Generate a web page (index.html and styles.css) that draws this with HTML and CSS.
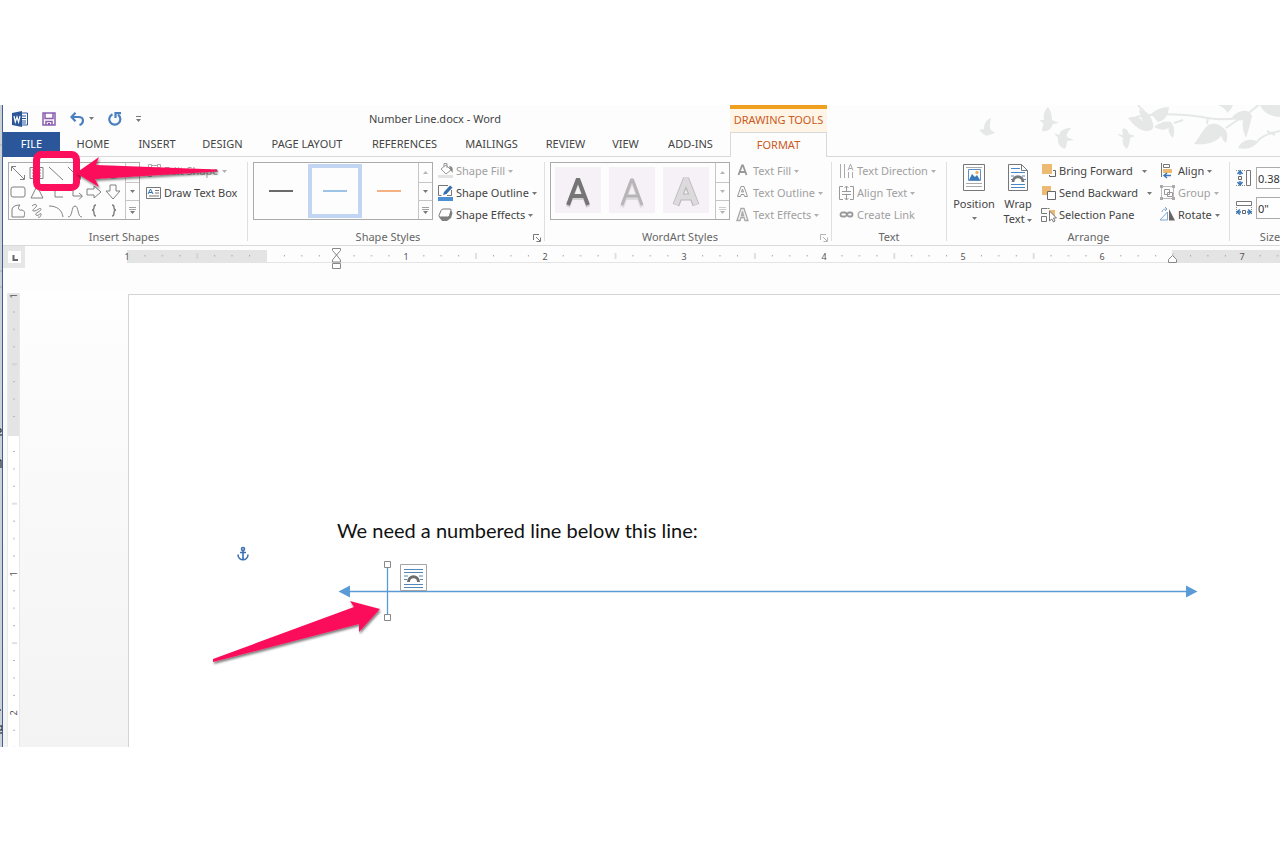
FILE: index.html
```html
<!DOCTYPE html>
<html lang="en">
<head>
<meta charset="utf-8">
<title>Number Line.docx - Word</title>
<link rel="stylesheet" href="styles.css">
</head>
<body>
<svg class="defs" aria-hidden="true">
  <symbol id="caret" viewBox="0 0 5 3"><path d="M0 0h5L2.5 3z" fill="currentColor"/></symbol>
  <symbol id="up" viewBox="0 0 5 3"><path d="M0 3h5L2.5 0z" fill="currentColor"/></symbol>
  <symbol id="more" viewBox="0 0 7 7"><path d="M0 .5h7M0 2.5h7" stroke="currentColor" stroke-width=".7"/><path d="M1 4h5L3.500 7z" fill="currentColor"/></symbol>
  <symbol id="launch" viewBox="0 0 8 8"><path d="M.5 6V.5H6M3 3l4 4M7.500 3.500v4h-4" fill="none" stroke="currentColor"/></symbol>
</svg>
<main class="screen">
  <div class="behind">
    <svg width="2" height="642" aria-hidden="true"><path d="M0 40h2M0 166h2M0 182h2" stroke="#a5abb2"/><path d="M0 324h1v3H0M0 330h2M0 355h1v8M0 605h1M0 621h2v4H0M0 628h2" stroke="#111" fill="none"/></svg>
  </div>
  <div class="window">
    <header class="titlebar">
      <div class="quick">
        <button aria-label="Word"><svg width="16" height="16" viewBox="0 0 16 16"><path d="M9 2h6.500v12H9" fill="#fff" stroke="#2b579a"/><path d="M10 5h4M10 7.500h4M10 10h4M10 12h4" stroke="#2b579a"/><path d="M0 2l10-2v16L0 14z" fill="#2b579a"/><path d="M2 5l1.300 6L5 6l1.600 5L8 5" fill="none" stroke="#fff" stroke-width="1.200"/></svg></button>
        <button aria-label="Save"><svg width="14" height="14" viewBox="0 0 14 14"><path d="M1 1h12v12H1zM3 1v5.500h8V1M4 13V9.500h6V13" fill="none" stroke="#8a5cae" stroke-width="1.500"/><path d="M6 11h2v2H6z" fill="#8a5cae"/></svg></button>
        <button class="undo" aria-label="Undo"><svg width="14" height="14" viewBox="0 0 14 14"><path d="M2 5h6.500c6 0 5.500 6.500 1 8" fill="none" stroke="#4a7fc0" stroke-width="2.200"/><path d="M5.500.8L1.500 5l4 4.200" fill="none" stroke="#4a7fc0" stroke-width="2.200"/></svg><svg class="c" width="5" height="3"><use href="#caret"/></svg></button>
        <button aria-label="Redo"><svg width="14" height="14" viewBox="0 0 14 14"><path d="M4.500 2.200a5.500 5.500 0 1 0 5.500.5" fill="none" stroke="#4a7fc0" stroke-width="2.200"/><path d="M7.500 6V1.200H13" fill="none" stroke="#4a7fc0" stroke-width="2.200"/></svg></button>
        <button class="custom" aria-label="Customize"><svg width="5" height="6" viewBox="0 0 5 6"><path d="M0 .5h5" stroke="#777"/><path d="M0 3h5L2.500 6z" fill="#777"/></svg></button>
      </div>
      <h1 class="title">Number Line.docx - Word</h1>
      <div class="context">DRAWING TOOLS</div>
      <svg class="art" width="320" height="50" viewBox="0 0 320 50" aria-hidden="true">
        <g fill="#e5e8e7">
          <path d="M19 30l5-1c0-5 2-9 7-11-1 5-2 8 0 12l4 3-6 2c-4 2-6-2-10-5z"/>
          <path d="M79 20h5c-1-6 1-10 4-13 3 4 4 8 4 13l7 3-6 1c-2 5-5 8-11 7 0-4 2-6 1-8z"/>
          <path d="M94 33l5 2c2-5 5-7 12-7-3 4-5 7-4 9l7 3-7 1c0 3-1 6-2 8-5-2-8-5-7-11z"/>
          <path d="M157 34l6 1c-1-4-1-6 1-7 3 1 4 3 5 6l6 2-5 2c0 4-1 7-3 11-4-3-5-7-4-11z"/>
          <path d="M168 18c6-2 12-2 15 4-1-5-4-9-4-12 8 1 12 4 14 14 1 5-1 7-7 7-8-1-13-7-18-13z"/>
          <path d="M181 5c3 4 2 8 7 11M191 14c5-4 10-7 18-7-1 8-3 13-11 15zM194 27c8-6 13-6 17-5-1 6-5 11-17 5zM211 22c4 5 4 10 2 16-5-5-6-9-2-16z"/>
          <path d="M248 25c8-3 13 0 17 5-5 10-14 16-31 14 5-6 7-12 14-19zM263 28c5 2 5 9 3 15-5-4-6-8-3-15z"/>
          <path d="M272 17c8-8 17-8 20-1-2 9-4 15-6 22-3-7-4-12-3-18-4 1-7 0-11-3zM278 48c4-9 14-10 20-6-5 6-11 8-20 6zM258 5h15c-2 5-4 6-6 8-1-4-5-6-9-8zM300 5h20v12c-11-1-17-5-20-12z"/>
        </g>
        <path d="M176 17c24-5 58-2 71 1 15 2 27 2 38-2l16-13M214 23l9-3M247 24l1-7M266 28l13-9M296 43c4-6 10-9 24-12M307 31l8 4M178 5l8 10" fill="none" stroke="#e5e8e7" stroke-width="2"/>
      </svg>
    </header>

    <nav class="tabs">
      <button class="file">FILE</button>
      <button>HOME</button><button>INSERT</button><button>DESIGN</button><button>PAGE LAYOUT</button><button>REFERENCES</button><button>MAILINGS</button><button>REVIEW</button><button>VIEW</button><button>ADD-INS</button>
      <button class="active">FORMAT</button>
    </nav>

    <div class="ribbon">
      <section class="group g1">
        <div class="body">
          <div class="gallery shapes">
            <div class="cells">
              <button aria-label="Double arrow"><svg viewBox="0 0 18 18"><path d="M3 3l12 12M2.500 7V2.500H7M11 15.500h4.500V11"/></svg></button>
              <button aria-label="Text box"><svg viewBox="0 0 18 18"><path d="M2 3.500h13v11H2zM4 6h4M10 6h3M4 9h9M4 12h9"/></svg></button>
              <button aria-label="Line"><svg viewBox="0 0 18 18"><path d="M2 3l14 13"/></svg></button>
              <button aria-label="Arrow"><svg viewBox="0 0 18 18"><path d="M2 3l12 12M10 15.500h4.500V11"/></svg></button>
              <button aria-label="Rectangle"><svg viewBox="0 0 18 18"><path d="M2 4h13v10H2z"/></svg></button>
              <button aria-label="Oval"><svg viewBox="0 0 18 18"><ellipse cx="9" cy="9" rx="7" ry="5"/></svg></button>
              <button aria-label="Rounded rectangle"><svg viewBox="0 0 18 18"><rect x="2" y="4" width="14" height="10" rx="2"/></svg></button>
              <button aria-label="Triangle"><svg viewBox="0 0 18 18"><path d="M9 3l6 12H3z"/></svg></button>
              <button aria-label="Elbow"><svg viewBox="0 0 18 18"><path d="M3 4h5v10h8"/></svg></button>
              <button aria-label="Elbow arrow"><svg viewBox="0 0 18 18"><path d="M3 4h4v9h9M13 10l3.500 3L13 16.500"/></svg></button>
              <button aria-label="Right arrow"><svg viewBox="0 0 18 18"><path d="M2 6h7V3l7 6-7 6v-3H2z"/></svg></button>
              <button aria-label="Down arrow"><svg viewBox="0 0 18 18"><path d="M6 2h6v6h4l-7 8-7-8h4z"/></svg></button>
              <button aria-label="Freeform"><svg viewBox="0 0 18 18"><path d="M3 15V7c1-3 4-4 8-4-3 3-1 6 2 5 3 1 3 3 2 7z"/></svg></button>
              <button aria-label="Scribble"><svg viewBox="0 0 18 18"><path d="M4 4c3-3 6-1 4 1S3 9 6 9s6-4 7-2-7 4-5 6 5-3 5-1-1 4-3 3"/></svg></button>
              <button aria-label="Arc"><svg viewBox="0 0 18 18"><path d="M2 4c8 0 13 4 14 11"/></svg></button>
              <button aria-label="Curve"><svg viewBox="0 0 18 18"><path d="M2 15c5 0 3-11 7-11s2 11 7 11"/></svg></button>
              <button aria-label="Left brace"><svg viewBox="0 0 18 18"><path d="M11 3c-4 0 0 5-4 5 4 0 0 6 4 6" stroke-width="1.400"/></svg></button>
              <button aria-label="Right brace"><svg viewBox="0 0 18 18"><path d="M8 3c4 0 0 5 4 5-4 0 0 6-4 6" stroke-width="1.400"/></svg></button>
            </div>
            <div class="scroll"><button aria-label="Up"><svg width="5" height="3"><use href="#up"/></svg></button><button aria-label="Down"><svg width="5" height="3"><use href="#caret"/></svg></button><button aria-label="More"><svg width="7" height="7"><use href="#more"/></svg></button></div>
          </div>
          <div class="cmds">
            <button class="off"><svg width="16" height="16" viewBox="0 0 16 16"><path d="M6 2.500h5M4 5v5" fill="none" stroke="#aaa"/><path d="M2.500 1.500h3v3h-3zM11.500 1.500h3v3h-3zM2.500 10.500h3v3h-3z" fill="none" stroke="#aaa"/></svg>Edit Shape<svg class="c" width="5" height="3"><use href="#caret"/></svg></button>
            <button><svg width="16" height="16" viewBox="0 0 16 16"><path d="M.5 2.500h14v11H.5zM9 5.500h4M9 8h4M3 11h10" fill="none" stroke="#777"/><path d="M2 9l2.500-5L7 9M3 7.500h3" fill="none" stroke="#2f6fb7"/></svg>Draw Text Box</button>
          </div>
        </div>
        <h2>Insert Shapes</h2>
      </section>

      <section class="group g2">
        <div class="body">
          <div class="gallery styles">
            <div class="cells"><button aria-label="Dark line"><i class="k"></i></button><button class="sel" aria-label="Blue line"><i class="b"></i></button><button aria-label="Orange line"><i class="o"></i></button></div>
            <div class="scroll"><button class="dim" aria-label="Up"><svg width="5" height="3"><use href="#up"/></svg></button><button aria-label="Down"><svg width="5" height="3"><use href="#caret"/></svg></button><button aria-label="More"><svg width="7" height="7"><use href="#more"/></svg></button></div>
          </div>
          <div class="cmds">
            <button class="off"><svg width="16" height="16" viewBox="0 0 16 16"><path d="M0 12h15v3H0z" fill="#e3e3e3"/><path d="M3 6l5-4 5 5-5 4zM6 4V.5h3V5" fill="#fff" stroke="#999"/><path d="M11 3c4 0 4 3 3.500 7L12 6z" fill="#888"/></svg>Shape Fill<svg class="c" width="5" height="3"><use href="#caret"/></svg></button>
            <button><svg width="16" height="16" viewBox="0 0 16 16"><path d="M0 12h15v4H0z" fill="#4a90d2"/><path d="M10 .5H.5v10h3M13.500 5v5.500H9" fill="none" stroke="#777"/><path d="M5 10l1-3L12 .5 14.500 2.500 8.500 9z" fill="#356fae"/></svg>Shape Outline<svg class="c" width="5" height="3"><use href="#caret"/></svg></button>
            <button><svg width="16" height="16" viewBox="0 0 16 16"><path d="M13 3l1.500 3-1.500 5-4 3H4l-3-4z" fill="#808080"/><path d="M5.500 2H12q1.500 0 1 1.500l-1.500 5Q11 10 9.500 10H2.500Q.5 10 1 8.500l2-5Q3.500 2 5.500 2z" fill="#fff" stroke="#777"/></svg>Shape Effects<svg class="c" width="5" height="3"><use href="#caret"/></svg></button>
          </div>
        </div>
        <h2>Shape Styles</h2>
        <button class="launch" aria-label="Shape Styles options"><svg width="8" height="8"><use href="#launch"/></svg></button>
      </section>

      <section class="group g3">
        <div class="body">
          <div class="gallery art-styles">
            <div class="cells">
              <button aria-label="Dark fill"><svg viewBox="0 0 46 46"><path d="M13 40l9.500-26h1L33 40M16 31h14" fill="none" stroke="#d5d0d5" stroke-width="4"/><path d="M13 38l9.500-25h1L33 38M16 29h14" fill="none" stroke="#757575" stroke-width="4"/></svg></button>
              <button aria-label="Light fill"><svg viewBox="0 0 46 46"><path d="M13 40l9.500-26h1L33 40M16 31h14" fill="none" stroke="#dedade" stroke-width="4"/><path d="M13 38l9.500-25h1L33 38M16 29h14" fill="none" stroke="#b8b5b8" stroke-width="3"/></svg></button>
              <button aria-label="Outline fill"><svg viewBox="0 0 46 46"><path d="M13 38l9.500-24h1L33 38M16 30h14" fill="none" stroke="#bab7ba" stroke-width="7"/><path d="M13 37.500l9.500-24h1L33 37.500M16 30h14" fill="none" stroke="#dcdadc" stroke-width="5"/></svg></button>
            </div>
            <div class="scroll dim"><button aria-label="Up"><svg width="5" height="3"><use href="#up"/></svg></button><button aria-label="Down"><svg width="5" height="3"><use href="#caret"/></svg></button><button aria-label="More"><svg width="7" height="7"><use href="#more"/></svg></button></div>
          </div>
          <div class="cmds">
            <button class="off"><svg width="16" height="16" viewBox="0 0 16 16"><path d="M3.500 12L7 2.500h1L11.500 12M5 9h5" fill="none" stroke="#999" stroke-width="1.800"/></svg>Text Fill<svg class="c" width="5" height="3"><use href="#caret"/></svg></button>
            <button class="off"><svg width="16" height="16" viewBox="0 0 16 16"><path d="M2.500 11.500l3.500-10h3l3.500 10h-3L9 9.500H6l-.5 2zM6.500 7h2l-1-3z" fill="none" stroke="#999"/></svg>Text Outline<svg class="c" width="5" height="3"><use href="#caret"/></svg></button>
            <button class="off"><svg width="16" height="16" viewBox="0 0 16 16"><path d="M2 13.500l4-12h3l4 12h-3l-1-3H6l-1 3zM6.500 8.500h2l-1-4z" fill="#f4f4f4" stroke="#aaa" stroke-width="1.300"/></svg>Text Effects<svg class="c" width="5" height="3"><use href="#caret"/></svg></button>
          </div>
        </div>
        <h2>WordArt Styles</h2>
        <button class="launch dim" aria-label="WordArt Styles options"><svg width="8" height="8"><use href="#launch"/></svg></button>
      </section>

      <section class="group g4">
        <div class="body">
          <div class="cmds">
            <button class="off"><svg width="16" height="16" viewBox="0 0 16 16"><path d="M1.500 1v14M5.500 1v14M9.500 9v6M13.500 9v6M9 7.500L11.500 1 14 7.500M10 5.500h3" fill="none" stroke="#aaa"/></svg>Text Direction<svg class="c" width="5" height="3"><use href="#caret"/></svg></button>
            <button class="off"><svg width="16" height="16" viewBox="0 0 16 16"><path d="M4 1.500H.5v13H4M11 1.500h3.500v13H11M3 6.500h9M3 9.500h9M7.500 1v5M5.500 3l2-2 2 2M7.500 10v5M5.500 13l2 2 2-2" fill="none" stroke="#999"/></svg>Align Text<svg class="c" width="5" height="3"><use href="#caret"/></svg></button>
            <button class="off"><svg width="16" height="16" viewBox="0 0 16 16"><path d="M6 5.500H3.500a2 2 0 0 0 0 4H6c2 0 2-4 4-4h1.500a2 2 0 0 1 0 4H10c-2 0-2-4-4-4" fill="none" stroke="#999" stroke-width="1.800"/></svg>Create Link</button>
          </div>
        </div>
        <h2>Text</h2>
      </section>

      <section class="group g5">
        <div class="body">
          <button class="big"><svg width="22" height="28" viewBox="0 0 22 28"><path d="M.5.500h21v26H.5z" fill="#fff" stroke="#777"/><path d="M3 3.500h16M3 19.500h16M3 22.500h16" stroke="#aaa"/><path d="M5.500 5.500h12v11h-12z" fill="#fff" stroke="#5b8fc7"/><path d="M6 16l3-6 3 3 2-2 3 5z" fill="#3a77b8"/><circle cx="14" cy="8.500" r="1.700" fill="#eab36b"/></svg><span>Position</span><svg class="c" width="5" height="3"><use href="#caret"/></svg></button>
          <button class="big wrap"><svg width="22" height="28" viewBox="0 0 22 28"><path d="M1.500.500h13l6 6v20h-19zM14.500.500v6h6" fill="#fff" stroke="#777"/><path d="M4 4.500h9M4 8.500h14M4 12h3M15 12h3M4 15.500h2M17 15.500h2M4 20.500h14M4 23.500h14" stroke="#4a86c5"/><path d="M6 18c0-7 10-7 10 0" fill="none" stroke="#777" stroke-width="2.800"/></svg><span>Wrap</span><span>Text <svg class="c" width="5" height="3"><use href="#caret"/></svg></span></button>
          <div class="cmds order">
            <button><svg width="16" height="16" viewBox="0 0 16 16"><path d="M1 1h10v10H1z" fill="#ecba72"/><path d="M12 7.500h2.500v6h-6V12" fill="none" stroke="#666"/></svg><span>Bring Forward</span><svg class="c" width="5" height="3"><use href="#caret"/></svg></button>
            <button class="wide"><svg width="16" height="16" viewBox="0 0 16 16"><path d="M1 1h9v9H1z" fill="#ecba72"/><path d="M6.500 6.500h8v8h-8z" fill="#fff" stroke="#666"/></svg><span>Send Backward</span><svg class="c" width="5" height="3"><use href="#caret"/></svg></button>
            <button><svg width="16" height="16" viewBox="0 0 16 16"><path d="M8 3h6v8H8z" fill="#ecba72"/><path d="M6 1.500H.5v5H6M.5 9.500h5v5h-5zM6.500 1.500h2" fill="none" stroke="#777"/><path d="M8.500 4v10l2.300-2 1.700 3 1.500-1-1.500-3h3z" fill="#fff" stroke="#777"/></svg><span>Selection Pane</span></button>
          </div>
          <div class="cmds place">
            <button><svg width="16" height="16" viewBox="0 0 16 16"><path d="M1.500 0v14" stroke="#777"/><path d="M3.500 1.500h6v3h-6z" fill="#fff" stroke="#777"/><path d="M3 6h9v4H3z" fill="#ecba72"/><path d="M4 12.500h7M7 10l-3 2.500L7 15" fill="none" stroke="#3a77b8" stroke-width="1.500"/></svg>Align<svg class="c" width="5" height="3"><use href="#caret"/></svg></button>
            <button class="off"><svg width="16" height="16" viewBox="0 0 16 16"><path d="M1.500 1.500h12v12h-12z" fill="none" stroke="#bbb"/><path d="M4.500 4.500h5v5h-5zM7.500 7.500h5v4h-5z" fill="none" stroke="#999"/><path d="M0 0h3v3H0zM12 0h3v3h-3zM0 12h3v3H0zM12 12h3v3h-3z" fill="#aaa"/></svg>Group<svg class="c" width="5" height="3"><use href="#caret"/></svg></button>
            <button><svg width="16" height="16" viewBox="0 0 16 16"><path d="M7.500 5v8H0zM2 5c0-2 2-3 4-3M5 0l2 2-2 2" fill="none" stroke="#7ea6cf"/><path d="M9 2l6 11.500H9z" fill="#666"/></svg>Rotate<svg class="c" width="5" height="3"><use href="#caret"/></svg></button>
          </div>
        </div>
        <h2>Arrange</h2>
      </section>

      <section class="group g6">
        <div class="body sizes">
          <label><svg width="16" height="18" viewBox="0 0 16 18"><path d="M10.500 1.500h4v15h-4z" fill="#fff" stroke="#777"/><path d="M0 1.500h9M0 16.500h9" stroke="#888" stroke-dasharray="1 1"/><path d="M4 2v4M4 12v4M1.500 5L4 2l2.500 3M1.500 13L4 16l2.500-3" fill="none" stroke="#3a77b8" stroke-width="1.500"/><path d="M2.500 7.500h3v3h-3z" fill="none" stroke="#666"/></svg><input type="text" value='0.38"' aria-label="Shape height"></label>
          <label><svg width="16" height="18" viewBox="0 0 16 18"><path d="M.5 2.500h15v4H.5z" fill="#fff" stroke="#777"/><path d="M.5 8v8M15.500 8v8" stroke="#888" stroke-dasharray="1 1"/><path d="M1 13h4M11 13h4M4 10.500L1 13l3 2.500M12 10.500l3 2.500-3 2.500" fill="none" stroke="#3a77b8" stroke-width="1.500"/><path d="M6.500 11.500h3v3h-3z" fill="none" stroke="#666"/></svg><input type="text" value='0"' aria-label="Shape width"></label>
        </div>
        <h2>Size</h2>
      </section>
    </div>

    <div class="hruler">
      <button class="tabstop" aria-label="Left tab"><svg width="13" height="12" viewBox="0 0 13 12"><path d="M0 0h13v12H0z" fill="#fff"/><path d="M5.500 4v5H10" fill="none" stroke="#666" stroke-width="2"/></svg></button>
      <svg class="scale" width="1160" height="26" aria-hidden="true">
        <defs>
          <pattern id="ticks" x="144" y="0" width="139.400" height="13" patternUnits="userSpaceOnUse"><path d="M17.400 7v1.500M34.800 7v1.500M52.300 7v1.500M87.100 7v1.500M104.500 7v1.500M122 7v1.500" stroke="#a5a5a5"/><path d="M69.700 5v6" stroke="#c4c4c4"/></pattern>
        </defs>
        <path d="M4 2h140v12H4zM1049 2h111v12h-111z" fill="#e4e4e4"/><path d="M4 14.500h1156" stroke="#e4e4e4"/>
        <path d="M8 2h1152v11H8z" fill="url(#ticks)"/>
        <g class="nums"><text x="4" y="12">1</text><text x="283" y="12">1</text><text x="422" y="12">2</text><text x="561" y="12">3</text><text x="701" y="12">4</text><text x="840" y="12">5</text><text x="979" y="12">6</text><text x="1119" y="12">7</text></g>
        <path d="M209.500.500h8v2l-4 4.500 4 5v2h-8v-2l4-5-4-4.500zM209.500 15.500h8v5h-8zM1045.500 14.500v-3l4-4 4 4v3z" fill="#fff" stroke="#888"/>
      </svg>
    </div>

    <div class="workspace">
      <svg class="vruler" width="13" height="454" aria-hidden="true">
        <defs><pattern id="vticks" x="0" y="141" width="13" height="139.400" patternUnits="userSpaceOnUse"><path d="M6 17.400h2M6 34.800h2M6 52.300h2M6 87.100h2M6 104.500h2M6 122h2" stroke="#b5b5b5"/><path d="M5 69.700h5" stroke="#c4c4c4"/></pattern></defs>
        <path d="M0 0h12v454H0z" fill="#fff"/><path d="M0 0h12v143H0z" fill="#e4e4e4"/><path d="M.5 0v454M12.500 0v454" stroke="#e8e8e8"/>
        <path d="M0 6h12v448H0z" fill="url(#vticks)"/>
        <g class="nums"><text transform="translate(10 3) rotate(-90)">1</text><text transform="translate(10 281) rotate(-90)">1</text><text transform="translate(10 420) rotate(-90)">2</text></g>
      </svg>
      <article class="page">
        <p>We need a numbered line below this line:</p>
        <svg class="drawing" width="1151" height="452" viewBox="129 295 1151 452" aria-hidden="true">
          <defs><filter id="shadow" x="-10%" y="-10%" width="120%" height="130%"><feDropShadow dx="1" dy="2" stdDeviation="1.300" flood-opacity=".5"/></filter></defs>
          <g fill="none" stroke="#3b6fb0" stroke-width="1.600"><circle cx="243" cy="549" r="1.500"/><path d="M243 551v9M240 552.500h6M238 554.500c0 7 10 7 10 0"/></g>
          <path d="M345 591.500h845M387.500 568v47" stroke="#5b9bd5" stroke-width="1.300"/>
          <path d="M338.500 591.500l11.500-6v12zM1197.500 591.500l-11.500-6v12z" fill="#5b9bd5"/>
          <path d="M384.500 561.500h6v6h-6zM384.500 614.500h6v6h-6z" fill="#fff" stroke="#888"/>
          <path d="M400.500 564.500h26v26h-26z" fill="#fff" stroke="#a5a5a5"/>
          <path d="M404 569.500h19M404 572.500h19M404 576h4M419 576h4M404 579.500h3M420 579.500h3M404 584.500h19M404 587.500h19" stroke="#5586b8"/>
          <path d="M408.500 582c0-7 10-7 10 0" fill="none" stroke="#6d6d6d" stroke-width="3"/>
          <path d="M213 659L354 607l-4-6 30 8-21 23 0-8-146 38z" fill="#fc0f5c" filter="url(#shadow)"/>
        </svg>
      </article>
    </div>
    <svg class="callout" width="200" height="50" viewBox="25 147 200 50" aria-hidden="true">
      <defs><filter id="shadow2" x="-10%" y="-10%" width="120%" height="140%"><feDropShadow dx="1" dy="2" stdDeviation="1.300" flood-opacity=".5"/></filter></defs>
      <rect x="36.500" y="154.500" width="40" height="33" rx="5" fill="none" stroke="#fc0f5c" stroke-width="7"/>
      <path d="M76 173l23-16-3 8 121 4.500v2L95 179l4 8z" fill="#fc0f5c" filter="url(#shadow2)"/>
    </svg>
  </div>
</main>
</body>
</html>
```
FILE: styles.css
```css
* { box-sizing: border-box; }
body {
  margin: 0;
  background: #fff;
  color: #444;
  font-family: "Noto Sans", "Open Sans", sans-serif;
  font-size: 11px;
  line-height: 16px;
}
button {
  margin: 0;
  padding: 0;
  border: 0;
  background: none;
  color: inherit;
  font: inherit;
  white-space: nowrap;
}
svg { display: block; flex: none; }
.defs { position: absolute; width: 0; height: 0; }

.screen { display: flex; padding: 105px 0; }
.behind { flex: none; width: 3px; background: #ccd1d8; border-right: 1px solid #3c6294; overflow: hidden; }
.window { position: relative; flex: 1; min-width: 0; overflow: hidden; background: #fdfdfd; }

.titlebar { position: relative; display: flex; align-items: center; height: 27px; }
.quick { display: flex; align-items: center; gap: 14px; width: 366px; padding-left: 9px; }
.undo { display: flex; align-items: center; gap: 5px; }
.title { width: 361px; margin: 0; font-size: 11px; font-weight: 400; }
.context {
  width: 97px;
  height: 27px;
  border-top: 4px solid #f0a01f;
  background: #fef5e7;
  color: #cb5a1b;
  line-height: 22px;
  text-align: center;
  white-space: nowrap;
}
.art { position: absolute; top: -5px; right: 0; }

.tabs {
  display: grid;
  grid-template-columns: 57px 66px 62px 69px 100px 95px 79px 69px 51px 79px 97px;
  height: 25px;
  border-bottom: 1px solid #d9d9d9;
}
.tabs button { padding-bottom: 1px; }
.file { background: #2b579a; color: #fff; }
.active { height: 25px; background: #fdfdfd; border: 1px solid #d9d9d9; border-bottom: 0; color: #cb5a1b; }

.ribbon { display: flex; height: 89px; border-bottom: 1px solid #d9d9d9; }
.group { position: relative; flex: none; display: flex; flex-direction: column; padding: 3px 0 0 5px; }
.group::after { content: ""; position: absolute; top: 5px; bottom: 4px; right: 0; border-right: 1px solid #e0e0e0; }
.group h2 { margin: 0; font-size: 11px; font-weight: 400; color: #666; text-align: center; }
.g1 { width: 245px; }
.g2 { width: 297px; }
.g3 { width: 287px; }
.g4 { width: 115px; padding-left: 7px; }
.g5 { width: 283px; padding-left: 4px; }
.g6 { width: 90px; padding-left: 6px; }
.g1 h2, .g4 h2 { padding-right: 8px; }
.g2 h2, .g3 h2 { padding-right: 22px; }
.g5 h2 { padding-right: 4px; }
.g6 h2 { padding-right: 16px; }
.body { display: flex; height: 69px; }
.gallery { display: flex; height: 58px; margin-top: 2px; border: 1px solid #ababab; }
.shapes { width: 132px; }
.shapes .cells { display: grid; grid-template-columns: repeat(6, 19px); grid-auto-rows: 19px; flex: 1; }
.shapes .cells svg { width: 18px; height: 18px; fill: none; stroke: #808080; }
.scroll { display: grid; grid-template-rows: repeat(3, 1fr); width: 14px; border-left: 1px solid #c6c6c6; color: #777; }
.scroll button { display: grid; place-items: center; }
.scroll button + button { border-top: 1px solid #c6c6c6; }
.dim, .scroll.dim, .dim .c { color: #b5b5b5; }
.styles, .art-styles { width: 180px; }
.styles .cells { display: flex; flex: 1; padding: 1px 0; }
.styles .cells button { display: grid; place-items: center; width: 54px; }
.styles i { width: 24px; height: 2px; }
.styles .sel { border: 4px solid #c2d5f2; }
.k { background: #6a6a6a; }
.b { background: #9dc3e6; }
.o { background: #f4b183; }
.art-styles .cells { display: flex; flex: 1; gap: 8px; padding: 4px; }
.art-styles .cells button { width: 46px; height: 46px; background: #f6f0f7; }
.cmds { display: flex; flex-direction: column; padding-left: 5px; }
.cmds button { display: flex; align-items: center; height: 22px; gap: 2px; }
.cmds button .c { margin-left: 1px; }
.off { color: #a0a0a0; }
.c { color: #777; }
.off .c { color: #b0b0b0; }
.g1 .cmds { padding-left: 6px; }
.g4 .cmds { padding-left: 0; }
.launch { position: absolute; right: 4px; bottom: 3px; color: #777; }
.launch.dim { color: #b5b5b5; }

.big { display: flex; flex-direction: column; align-items: center; width: 46px; padding-top: 4px; }
.big > .c { margin-top: 6px; }
.big span { line-height: 15px; }
.big > svg + span { margin-top: 4px; }
.wrap { width: 42px; }
.wrap span .c { display: inline-block; vertical-align: middle; }
.order { width: 117px; padding-left: 2px; }
.order button > span { min-width: 80px; text-align: left; }
.order .wide > span { min-width: 85px; }
.place { padding-left: 4px; }
.sizes { flex-direction: column; gap: 8px; padding-top: 7px; }
.sizes label { display: flex; align-items: center; gap: 4px; }
.sizes input {
  width: 64px;
  height: 22px;
  padding: 0 1px;
  border: 1px solid #ababab;
  color: #333;
  font: inherit;
}

.hruler { display: flex; height: 47px; }
.tabstop { flex: none; display: grid; place-items: center; width: 22px; height: 22px; background: #e6e6e6; }
.scale { margin: 2px 0 0 98px; }
.nums { font-size: 9px; fill: #555; text-anchor: middle; }

.workspace { display: flex; padding-left: 4px; background: linear-gradient(#fefefe, #f3f3f3); }
.page {
  position: relative;
  flex: 1;
  min-width: 0;
  margin: 1px 0 0 108px;
  padding: 223px 0 0 208px;
  border: solid #d4d4d4;
  border-width: 1px 0 0 1px;
  background: #fff;
  color: #111;
  overflow: hidden;
}
.page p { margin: 0; font-family: Lato, "Open Sans", sans-serif; font-size: 20px; line-height: 24px; white-space: nowrap; }
.drawing { position: absolute; left: 0; top: 0; }
.callout { position: absolute; left: 22px; top: 42px; }
```
